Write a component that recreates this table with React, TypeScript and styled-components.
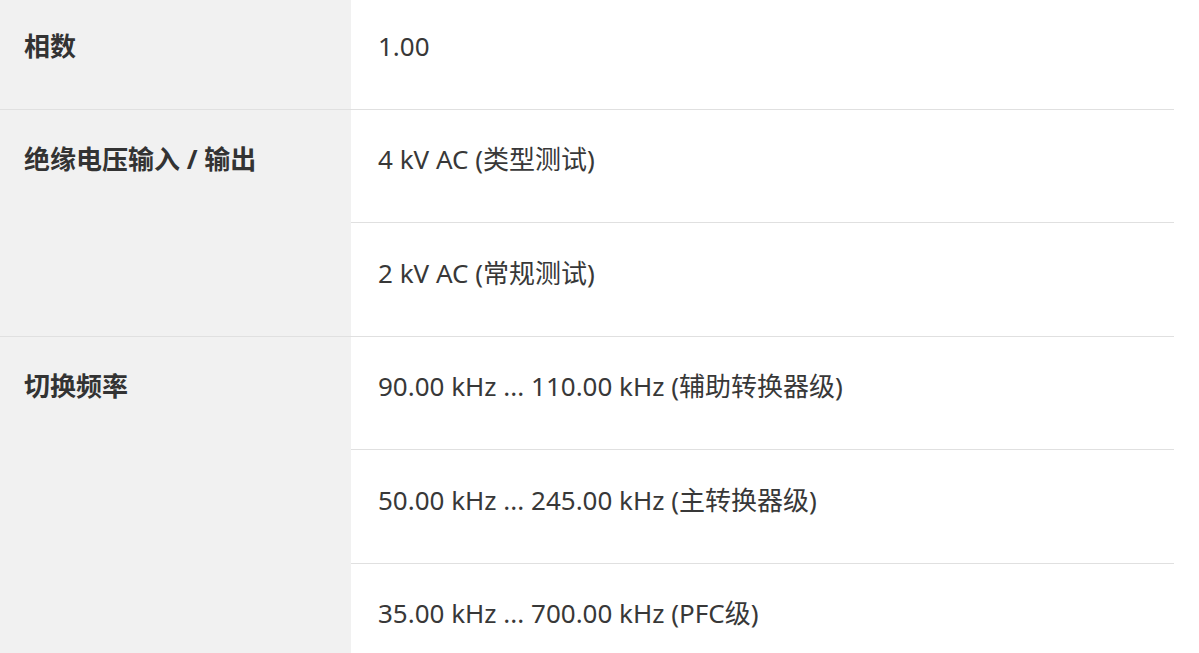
import styled, { createGlobalStyle } from "styled-components";

const GlobalStyle = createGlobalStyle`
  html, body {
    margin: 0;
    padding: 0;
    background: #ffffff;
    overflow: hidden;
  }
  body {
    font-family: "Noto Sans", "Noto Sans CJK SC", sans-serif;
    color: #333333;
  }
`;

const Table = styled.div`
  width: 1174px;
  margin-top: -4px;
  display: flex;
  flex-direction: column;
`;

const Group = styled.div<{ $first?: boolean }>`
  display: grid;
  grid-template-columns: 351px 1fr;
  border-top: ${(p) => (p.$first ? "none" : "1px solid #e0e0e0")};
`;

const Label = styled.div`
  background: #f1f1f1;
  padding: 30.5px 24px 0;
  font-size: 26px;
  line-height: 39px;
  font-weight: 700;
  color: #333333;
`;

const Values = styled.div`
  display: flex;
  flex-direction: column;
`;

const Value = styled.div<{ $first?: boolean }>`
  border-top: ${(p) => (p.$first ? "none" : "1px solid #e0e0e0")};
  padding: 30.5px 27px 43px;
  font-size: 26px;
  line-height: 39px;
  color: #383838;
`;

const rows = [
  { label: "相数", values: ["1.00"] },
  { label: "绝缘电压输入 / 输出", values: ["4 kV AC (类型测试)", "2 kV AC (常规测试)"] },
  {
    label: "切换频率",
    values: [
      "90.00 kHz ... 110.00 kHz (辅助转换器级)",
      "50.00 kHz ... 245.00 kHz (主转换器级)",
      "35.00 kHz ... 700.00 kHz (PFC级)",
    ],
  },
];

export default function App() {
  return (
    <>
      <GlobalStyle />
      <Table>
        {rows.map((row, i) => (
          <Group key={row.label} $first={i === 0}>
            <Label>{row.label}</Label>
            <Values>
              {row.values.map((v, j) => (
                <Value key={v} $first={j === 0}>
                  {v}
                </Value>
              ))}
            </Values>
          </Group>
        ))}
      </Table>
    </>
  );
}
